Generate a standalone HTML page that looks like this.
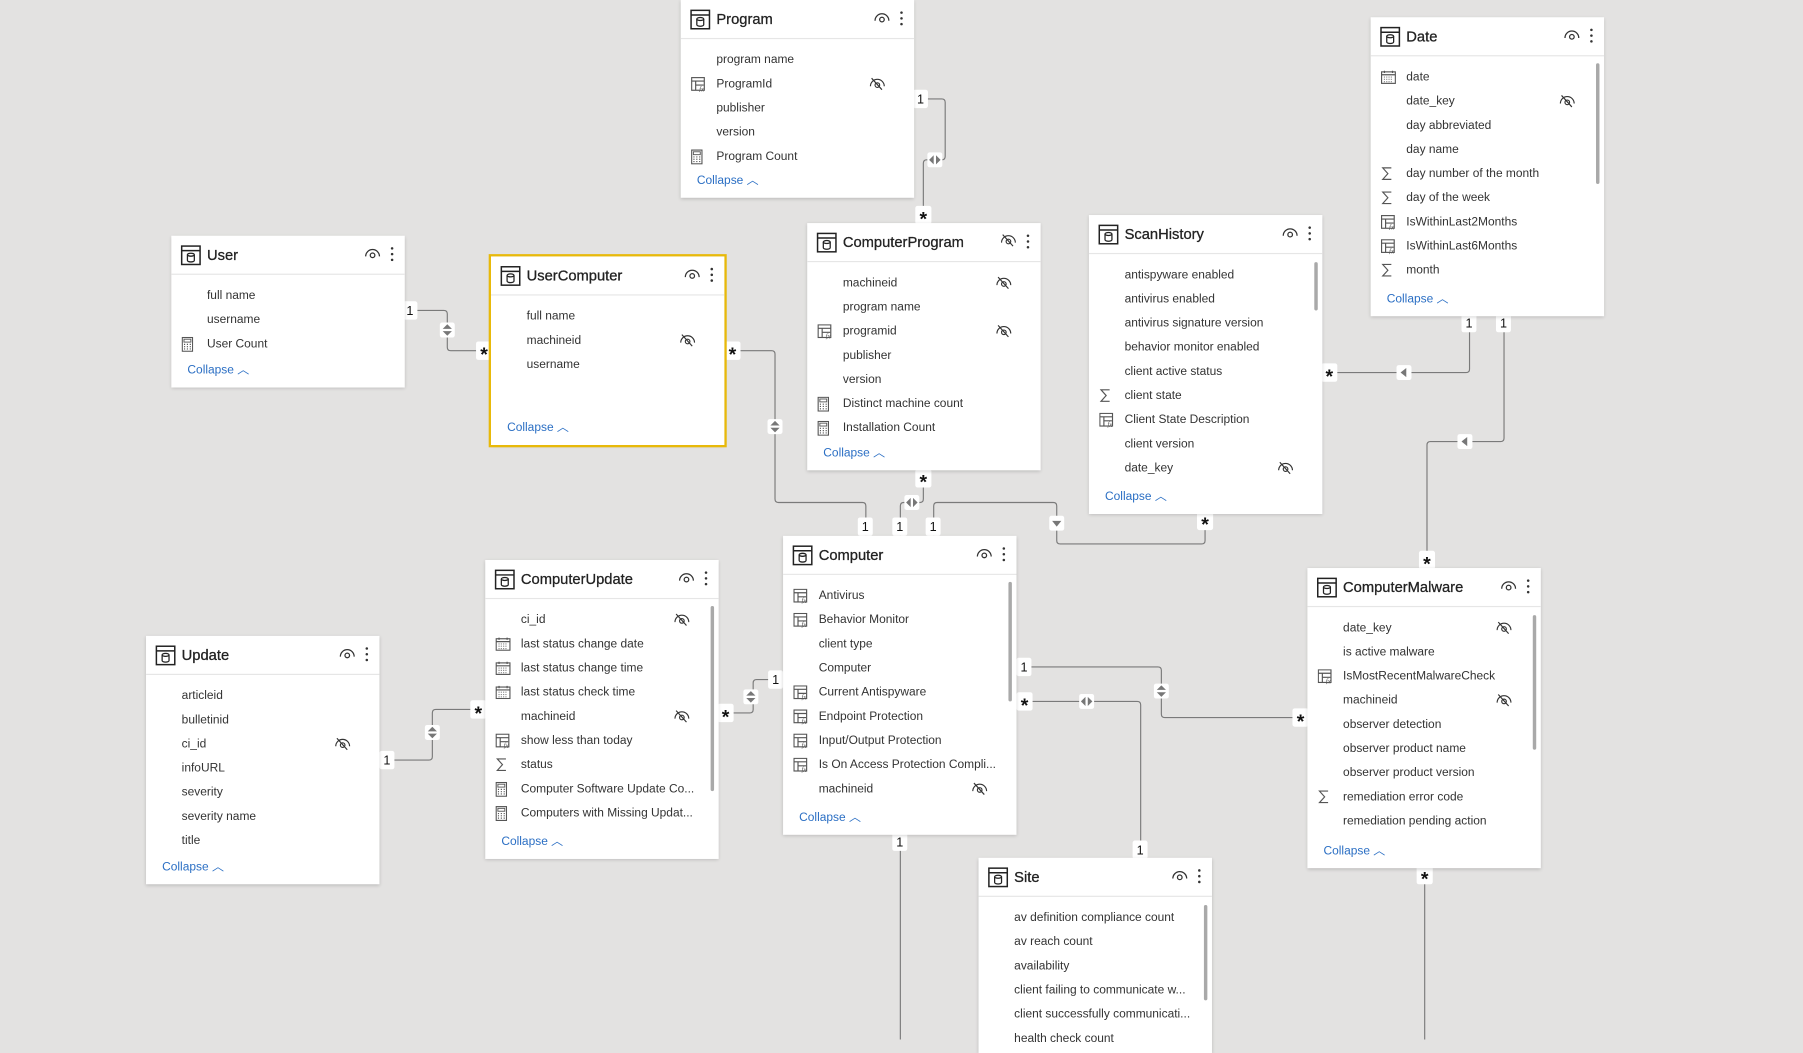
<!DOCTYPE html>
<html><head><meta charset="utf-8"><style>
html,body{margin:0;padding:0;width:1803px;height:1039px;overflow:hidden;background:#e3e2e1;}
#s{position:absolute;left:0;top:0;width:1568px;height:904px;transform:scale(1.14987);transform-origin:0 0;font-family:"Segoe UI","Liberation Sans",sans-serif;}
.c{position:absolute;background:#fff;box-shadow:0 1px 3px rgba(0,0,0,.18);width:203px;overflow:hidden;}
.c.y{outline:2px solid #e8b90a;}
.h{height:33px;border-bottom:1px solid #e6e6e6;position:relative;}
.h .t{position:absolute;left:31px;top:9px;font-size:12.8px;color:#222;font-weight:normal;letter-spacing:0;-webkit-text-stroke:.25px #222;}
.h .ti{position:absolute;left:8px;top:8px;}
.h .ey{position:absolute;right:21px;top:10px;}
.h .dt{position:absolute;right:9px;top:9px;}
.b{padding-top:8px;}
.r{height:21px;line-height:21px;font-size:10.4px;color:#333;position:relative;padding-left:31px;white-space:nowrap;}
.r svg.i{position:absolute;left:9px;top:4px;}
.r svg.hd{position:absolute;right:25px;top:4px;}
.col{position:absolute;left:14px;bottom:4px;font-size:10.4px;color:#2b6fc4;line-height:20px;}
.sb{position:absolute;width:3px;background:#a9a9a9;border-radius:2px;}
svg.ov{position:absolute;left:0;top:0;}
</style></head><body><div id="s">
<svg width="0" height="0" style="position:absolute">
<defs>
<symbol id="tb" viewBox="0 0 18 18"><rect x="1" y="1" width="16" height="16" fill="none" stroke="#222" stroke-width="1.3"/><line x1="1" y1="5" x2="17" y2="5" stroke="#222" stroke-width="1.3"/><path d="M6 8.5a3 1.3 0 0 1 6 0v5a3 1.3 0 0 1-6 0z" fill="none" stroke="#222" stroke-width="1.1"/><path d="M6 8.5a3 1.3 0 0 0 6 0" fill="none" stroke="#222" stroke-width="1.1"/></symbol>
<symbol id="eye" viewBox="0 0 14 10"><path d="M1 8a6 6 0 0 1 12 0" fill="none" stroke="#333" stroke-width="1.1"/><circle cx="7" cy="7" r="2" fill="none" stroke="#333" stroke-width="1.1"/></symbol>
<symbol id="hid" viewBox="0 0 14 12"><path d="M1 8a6 6 0 0 1 12 0" fill="none" stroke="#333" stroke-width="1"/><circle cx="7" cy="7" r="2" fill="none" stroke="#333" stroke-width="1"/><line x1="2" y1="1" x2="11" y2="11" stroke="#333" stroke-width="1"/></symbol>
<symbol id="dots" viewBox="0 0 4 14"><circle cx="2" cy="2" r="1.1" fill="#333"/><circle cx="2" cy="7" r="1.1" fill="#333"/><circle cx="2" cy="12" r="1.1" fill="#333"/></symbol>
<symbol id="fx" viewBox="0 0 14 13"><rect x=".5" y=".5" width="11" height="11" fill="none" stroke="#555"/><line x1=".5" y1="3.5" x2="11.5" y2="3.5" stroke="#555"/><line x1="4" y1="3.5" x2="4" y2="11.5" stroke="#555"/><line x1="4" y1="7" x2="11" y2="7" stroke="#555"/><text x="7" y="12.5" font-size="6" font-style="italic" fill="#555" font-family="Liberation Serif,serif">fx</text></symbol>
<symbol id="calc" viewBox="0 0 10 13"><rect x=".5" y=".5" width="9" height="12" fill="none" stroke="#555"/><rect x="2" y="2" width="6" height="2.5" fill="none" stroke="#555" stroke-width=".8"/><path d="M2 6.5h1M4.5 6.5h1M7 6.5h1M2 8.5h1M4.5 8.5h1M7 8.5h1M2 10.5h1M4.5 10.5h1M7 10.5h1" stroke="#555"/></symbol>
<symbol id="sig" viewBox="0 0 10 12"><path d="M9 1H1.5L6 6 1.5 11H9" fill="none" stroke="#555" stroke-width="1"/></symbol>
<symbol id="cal" viewBox="0 0 13 12"><rect x=".5" y="1.5" width="12" height="10" fill="none" stroke="#555"/><line x1=".5" y1="4" x2="12.5" y2="4" stroke="#555"/><path d="M3 .5v2M10 .5v2" stroke="#555"/><path d="M2.5 6h8M2.5 8h8M2.5 10h8" stroke="#888" stroke-dasharray="1 1"/></symbol>
<symbol id="ud" viewBox="0 0 14 14"><rect x=".5" y=".5" width="13" height="13" rx="2" fill="#fff"/><path d="M3 6L7 2 11 6zM3 8L7 12 11 8z" fill="#777"/></symbol>
<symbol id="lr" viewBox="0 0 14 14"><rect x=".5" y=".5" width="13" height="13" rx="2" fill="#fff"/><path d="M6 3L2 7 6 11zM8 3L12 7 8 11z" fill="#777"/></symbol>
<symbol id="lf" viewBox="0 0 14 14"><rect x=".5" y=".5" width="13" height="13" rx="2" fill="#fff"/><path d="M9 3L4 7 9 11z" fill="#777"/></symbol>
<symbol id="dn" viewBox="0 0 14 14"><rect x=".5" y=".5" width="13" height="13" rx="2" fill="#fff"/><path d="M3 5L7 10 11 5z" fill="#777"/></symbol>
</defs></svg>

<svg class="ov" width="1568" height="904" style="z-index:0">
<g fill="none" stroke="#7a7a7a" stroke-width="1">
<path d="M795 86H819q3 0 3 3V136q0 3-3 3H806q-3 0-3 3V194"/>
<path d="M352 270H386q3 0 3 3V302q0 3 3 3H427"/>
<path d="M631 305H671q3 0 3 3V434q0 3 3 3H750q3 0 3 3V466"/>
<path d="M803 409V434q0 3-3 3H786q-3 0-3 3V466"/>
<path d="M1048 447V470q0 3-3 3H922q-3 0-3-3V440q0-3-3-3H815q-3 0-3 3V466"/>
<path d="M1278 275V321q0 3-3 3H1150"/>
<path d="M1308 275V381q0 3-3 3H1244q-3 0-3 3V494"/>
<path d="M681 591H658q-3 0-3 3V617q0 3-3 3H625"/>
<path d="M330 661H373q3 0 3-3V620q0-3 3-3H422"/>
<path d="M884 580H1007q3 0 3 3V621q0 3 3 3H1137"/>
<path d="M884 610H989q3 0 3 3V746"/>
<path d="M783 726V904"/>
<path d="M1239 755V904"/>
</g>
<g font-family="Liberation Sans,sans-serif" font-size="11" text-anchor="middle">
<g fill="#fff"><rect x="794" y="78" width="13" height="16" rx="2"/><rect x="350" y="262" width="13" height="16" rx="2"/><rect x="746" y="450" width="13" height="16" rx="2"/><rect x="776" y="450" width="13" height="16" rx="2"/><rect x="805" y="450" width="13" height="16" rx="2"/><rect x="1271" y="273" width="13" height="16" rx="2"/><rect x="1301" y="273" width="13" height="16" rx="2"/><rect x="668" y="583" width="13" height="16" rx="2"/><rect x="330" y="653" width="13" height="16" rx="2"/><rect x="884" y="572" width="13" height="16" rx="2"/><rect x="985" y="731" width="13" height="16" rx="2"/><rect x="776" y="724" width="13" height="16" rx="2"/>
<rect x="796" y="179" width="14" height="16" rx="2"/><rect x="414" y="297" width="14" height="16" rx="2"/><rect x="630" y="297" width="14" height="16" rx="2"/><rect x="796" y="408" width="14" height="16" rx="2"/><rect x="1041" y="445" width="14" height="16" rx="2"/><rect x="1149" y="316" width="14" height="16" rx="2"/><rect x="1234" y="479" width="14" height="16" rx="2"/><rect x="624" y="612" width="14" height="16" rx="2"/><rect x="409" y="609" width="14" height="16" rx="2"/><rect x="1124" y="616" width="14" height="16" rx="2"/><rect x="884" y="602" width="14" height="16" rx="2"/><rect x="1232" y="753" width="14" height="16" rx="2"/></g>
<g fill="#111"><text x="800.5" y="90">1</text><text x="356.5" y="274">1</text><text x="752.5" y="462">1</text><text x="782.5" y="462">1</text><text x="811.5" y="462">1</text><text x="1277.5" y="285">1</text><text x="1307.5" y="285">1</text><text x="674.5" y="595">1</text><text x="336.5" y="665">1</text><text x="890.5" y="584">1</text><text x="991.5" y="743">1</text><text x="782.5" y="736">1</text>
<g font-size="17" font-weight="bold"><text x="803" y="196">*</text><text x="421" y="314">*</text><text x="637" y="314">*</text><text x="803" y="425">*</text><text x="1048" y="462">*</text><text x="1156" y="333">*</text><text x="1241" y="496">*</text><text x="631" y="629">*</text><text x="416" y="626">*</text><text x="1131" y="633">*</text><text x="891" y="619">*</text><text x="1239" y="770">*</text></g></g>
</g>
<use href="#lr" x="806" y="132" width="14" height="14"/>
<use href="#ud" x="382" y="280" width="14" height="14"/>
<use href="#ud" x="667" y="364" width="14" height="14"/>
<use href="#lr" x="786" y="430" width="14" height="14"/>
<use href="#dn" x="912" y="448" width="14" height="14"/>
<use href="#lf" x="1214" y="317" width="14" height="14"/>
<use href="#lf" x="1267" y="377" width="14" height="14"/>
<use href="#ud" x="646" y="599" width="14" height="14"/>
<use href="#ud" x="369" y="630" width="14" height="14"/>
<use href="#ud" x="1003" y="594" width="14" height="14"/>
<use href="#lr" x="938" y="603" width="14" height="14"/>
</svg>

<div class="c" style="left:592px;top:0;height:172px">
<div class="h"><svg class="ti" width="18" height="18"><use href="#tb"/></svg><span class="t">Program</span><svg class="ey" width="14" height="10"><use href="#eye"/></svg><svg class="dt" width="4" height="14"><use href="#dots"/></svg></div>
<div class="b">
<div class="r">program name</div>
<div class="r"><svg class="i" width="14" height="13"><use href="#fx"/></svg>ProgramId<svg class="hd" width="14" height="12"><use href="#hid"/></svg></div>
<div class="r">publisher</div>
<div class="r">version</div>
<div class="r"><svg class="i" width="10" height="13"><use href="#calc"/></svg>Program Count</div>
</div><div class="col">Collapse ︿</div></div>

<div class="c" style="left:1192px;top:15px;height:260px">
<div class="h"><svg class="ti" width="18" height="18"><use href="#tb"/></svg><span class="t">Date</span><svg class="ey" width="14" height="10"><use href="#eye"/></svg><svg class="dt" width="4" height="14"><use href="#dots"/></svg></div>
<div class="b">
<div class="r"><svg class="i" width="13" height="12"><use href="#cal"/></svg>date</div>
<div class="r">date_key<svg class="hd" width="14" height="12"><use href="#hid"/></svg></div>
<div class="r">day abbreviated</div>
<div class="r">day name</div>
<div class="r"><svg class="i" width="10" height="12"><use href="#sig"/></svg>day number of the month</div>
<div class="r"><svg class="i" width="10" height="12"><use href="#sig"/></svg>day of the week</div>
<div class="r"><svg class="i" width="14" height="13"><use href="#fx"/></svg>IsWithinLast2Months</div>
<div class="r"><svg class="i" width="14" height="13"><use href="#fx"/></svg>IsWithinLast6Months</div>
<div class="r"><svg class="i" width="10" height="12"><use href="#sig"/></svg>month</div>
</div><div class="sb" style="left:196px;top:40px;height:105px"></div><div class="col">Collapse ︿</div></div>

<div class="c" style="left:149px;top:205px;height:132px">
<div class="h"><svg class="ti" width="18" height="18"><use href="#tb"/></svg><span class="t">User</span><svg class="ey" width="14" height="10"><use href="#eye"/></svg><svg class="dt" width="4" height="14"><use href="#dots"/></svg></div>
<div class="b">
<div class="r">full name</div>
<div class="r">username</div>
<div class="r"><svg class="i" width="10" height="13"><use href="#calc"/></svg>User Count</div>
</div><div class="col">Collapse ︿</div></div>

<div class="c y" style="left:427px;top:223px;height:164px">
<div class="h"><svg class="ti" width="18" height="18"><use href="#tb"/></svg><span class="t">UserComputer</span><svg class="ey" width="14" height="10"><use href="#eye"/></svg><svg class="dt" width="4" height="14"><use href="#dots"/></svg></div>
<div class="b">
<div class="r">full name</div>
<div class="r">machineid<svg class="hd" width="14" height="12"><use href="#hid"/></svg></div>
<div class="r">username</div>
</div><div class="col">Collapse ︿</div></div>

<div class="c" style="left:702px;top:194px;height:215px">
<div class="h"><svg class="ti" width="18" height="18"><use href="#tb"/></svg><span class="t">ComputerProgram</span><svg class="ey" width="14" height="12" style="top:9px"><use href="#hid"/></svg><svg class="dt" width="4" height="14"><use href="#dots"/></svg></div>
<div class="b">
<div class="r">machineid<svg class="hd" width="14" height="12"><use href="#hid"/></svg></div>
<div class="r">program name</div>
<div class="r"><svg class="i" width="14" height="13"><use href="#fx"/></svg>programid<svg class="hd" width="14" height="12"><use href="#hid"/></svg></div>
<div class="r">publisher</div>
<div class="r">version</div>
<div class="r"><svg class="i" width="10" height="13"><use href="#calc"/></svg>Distinct machine count</div>
<div class="r"><svg class="i" width="10" height="13"><use href="#calc"/></svg>Installation Count</div>
</div><div class="col">Collapse ︿</div></div>

<div class="c" style="left:947px;top:187px;height:260px">
<div class="h"><svg class="ti" width="18" height="18"><use href="#tb"/></svg><span class="t">ScanHistory</span><svg class="ey" width="14" height="10"><use href="#eye"/></svg><svg class="dt" width="4" height="14"><use href="#dots"/></svg></div>
<div class="b">
<div class="r">antispyware enabled</div>
<div class="r">antivirus enabled</div>
<div class="r">antivirus signature version</div>
<div class="r">behavior monitor enabled</div>
<div class="r">client active status</div>
<div class="r"><svg class="i" width="10" height="12"><use href="#sig"/></svg>client state</div>
<div class="r"><svg class="i" width="14" height="13"><use href="#fx"/></svg>Client State Description</div>
<div class="r">client version</div>
<div class="r">date_key<svg class="hd" width="14" height="12"><use href="#hid"/></svg></div>
</div><div class="sb" style="left:196px;top:41px;height:42px"></div><div class="col">Collapse ︿</div></div>

<div class="c" style="left:422px;top:487px;height:260px">
<div class="h"><svg class="ti" width="18" height="18"><use href="#tb"/></svg><span class="t">ComputerUpdate</span><svg class="ey" width="14" height="10"><use href="#eye"/></svg><svg class="dt" width="4" height="14"><use href="#dots"/></svg></div>
<div class="b">
<div class="r">ci_id<svg class="hd" width="14" height="12"><use href="#hid"/></svg></div>
<div class="r"><svg class="i" width="13" height="12"><use href="#cal"/></svg>last status change date</div>
<div class="r"><svg class="i" width="13" height="12"><use href="#cal"/></svg>last status change time</div>
<div class="r"><svg class="i" width="13" height="12"><use href="#cal"/></svg>last status check time</div>
<div class="r">machineid<svg class="hd" width="14" height="12"><use href="#hid"/></svg></div>
<div class="r"><svg class="i" width="14" height="13"><use href="#fx"/></svg>show less than today</div>
<div class="r"><svg class="i" width="10" height="12"><use href="#sig"/></svg>status</div>
<div class="r"><svg class="i" width="10" height="13"><use href="#calc"/></svg>Computer Software Update Co...</div>
<div class="r"><svg class="i" width="10" height="13"><use href="#calc"/></svg>Computers with Missing Updat...</div>
</div><div class="sb" style="left:196px;top:40px;height:161px"></div><div class="col">Collapse ︿</div></div>

<div class="c" style="left:127px;top:553px;height:216px">
<div class="h"><svg class="ti" width="18" height="18"><use href="#tb"/></svg><span class="t">Update</span><svg class="ey" width="14" height="10"><use href="#eye"/></svg><svg class="dt" width="4" height="14"><use href="#dots"/></svg></div>
<div class="b">
<div class="r">articleid</div>
<div class="r">bulletinid</div>
<div class="r">ci_id<svg class="hd" width="14" height="12"><use href="#hid"/></svg></div>
<div class="r">infoURL</div>
<div class="r">severity</div>
<div class="r">severity name</div>
<div class="r">title</div>
</div><div class="col">Collapse ︿</div></div>

<div class="c" style="left:681px;top:466px;height:260px">
<div class="h"><svg class="ti" width="18" height="18"><use href="#tb"/></svg><span class="t">Computer</span><svg class="ey" width="14" height="10"><use href="#eye"/></svg><svg class="dt" width="4" height="14"><use href="#dots"/></svg></div>
<div class="b">
<div class="r"><svg class="i" width="14" height="13"><use href="#fx"/></svg>Antivirus</div>
<div class="r"><svg class="i" width="14" height="13"><use href="#fx"/></svg>Behavior Monitor</div>
<div class="r">client type</div>
<div class="r">Computer</div>
<div class="r"><svg class="i" width="14" height="13"><use href="#fx"/></svg>Current Antispyware</div>
<div class="r"><svg class="i" width="14" height="13"><use href="#fx"/></svg>Endpoint Protection</div>
<div class="r"><svg class="i" width="14" height="13"><use href="#fx"/></svg>Input/Output Protection</div>
<div class="r"><svg class="i" width="14" height="13"><use href="#fx"/></svg>Is On Access Protection Compli...</div>
<div class="r">machineid<svg class="hd" width="14" height="12"><use href="#hid"/></svg></div>
</div><div class="sb" style="left:196px;top:40px;height:104px"></div><div class="col">Collapse ︿</div></div>

<div class="c" style="left:1137px;top:494px;height:261px">
<div class="h"><svg class="ti" width="18" height="18"><use href="#tb"/></svg><span class="t">ComputerMalware</span><svg class="ey" width="14" height="10"><use href="#eye"/></svg><svg class="dt" width="4" height="14"><use href="#dots"/></svg></div>
<div class="b">
<div class="r">date_key<svg class="hd" width="14" height="12"><use href="#hid"/></svg></div>
<div class="r">is active malware</div>
<div class="r"><svg class="i" width="14" height="13"><use href="#fx"/></svg>IsMostRecentMalwareCheck</div>
<div class="r">machineid<svg class="hd" width="14" height="12"><use href="#hid"/></svg></div>
<div class="r">observer detection</div>
<div class="r">observer product name</div>
<div class="r">observer product version</div>
<div class="r"><svg class="i" width="10" height="12"><use href="#sig"/></svg>remediation error code</div>
<div class="r">remediation pending action</div>
</div><div class="sb" style="left:196px;top:41px;height:117px"></div><div class="col">Collapse ︿</div></div>

<div class="c" style="left:851px;top:746px;height:170px">
<div class="h"><svg class="ti" width="18" height="18"><use href="#tb"/></svg><span class="t">Site</span><svg class="ey" width="14" height="10"><use href="#eye"/></svg><svg class="dt" width="4" height="14"><use href="#dots"/></svg></div>
<div class="b">
<div class="r">av definition compliance count</div>
<div class="r">av reach count</div>
<div class="r">availability</div>
<div class="r">client failing to communicate w...</div>
<div class="r">client successfully communicati...</div>
<div class="r">health check count</div>
</div><div class="sb" style="left:196px;top:41px;height:83px"></div></div>

</div></body></html>
